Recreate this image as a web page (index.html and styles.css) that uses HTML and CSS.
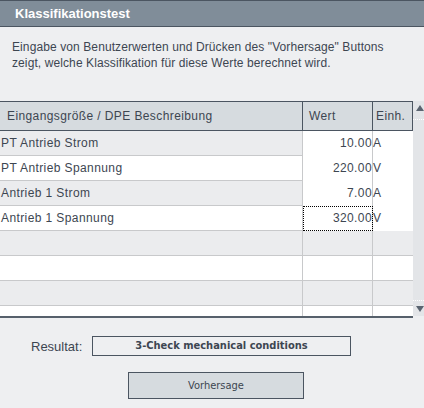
FILE: index.html
```html
<!DOCTYPE html>
<html>
<head>
<meta charset="utf-8">
<link rel="stylesheet" href="styles.css">
</head>
<body>
<div class="titlebar">Klassifikationstest</div>
<div class="desc">Eingabe von Benutzerwerten und Drücken des "Vorhersage" Buttons<br>zeigt, welche Klassifikation für diese Werte berechnet wird.</div>
<div class="tablearea">
  <div class="table">
    <div class="row head">
      <div class="c1">Eingangsgröße / DPE Beschreibung</div>
      <div class="c2">Wert</div>
      <div class="c3">Einh.</div>
    </div>
    <div class="row alt data">
      <div class="c1">PT Antrieb Strom</div>
      <div class="c2">10.00</div>
      <div class="c3">A</div>
    </div>
    <div class="row data">
      <div class="c1">PT Antrieb Spannung</div>
      <div class="c2">220.00</div>
      <div class="c3">V</div>
    </div>
    <div class="row alt data">
      <div class="c1">Antrieb 1 Strom</div>
      <div class="c2">7.00</div>
      <div class="c3">A</div>
    </div>
    <div class="row data">
      <div class="c1">Antrieb 1 Spannung</div>
      <div class="c2 focus">320.00</div>
      <div class="c3">V</div>
    </div>
    <div class="row alt"><div class="c1"></div><div class="c2"></div><div class="c3"></div></div>
    <div class="row"><div class="c1"></div><div class="c2"></div><div class="c3"></div></div>
    <div class="row alt"><div class="c1"></div><div class="c2"></div><div class="c3"></div></div>
    <div class="row"><div class="c1"></div><div class="c2"></div><div class="c3"></div></div>
  </div>
  <div class="scrollbar">
    <div class="arrow up"></div>
    <div class="dots first"></div>
    <div class="track"></div>
    <div class="dots last"></div>
    <div class="arrow down"></div>
  </div>
</div>
<div class="result">
  <span class="label">Resultat:</span>
  <div class="resbox">3-Check mechanical conditions</div>
</div>
<div class="actions">
  <button class="btn">Vorhersage</button>
</div>
</body>
</html>
```
FILE: styles.css
```css
html, body {
  margin: 0;
  padding: 0;
}
body {
  width: 424px;
  height: 408px;
  overflow: hidden;
  background: #eeeff1;
  font-family: "Liberation Sans", Arial, sans-serif;
  color: #3d4651;
}
.titlebar {
  height: 25px;
  line-height: 25px;
  border-top: 1px solid #4b5561;
  border-bottom: 1px solid #4b5561;
  background: #808d99;
  color: #ffffff;
  font-weight: bold;
  font-size: 13px;
  padding-left: 15px;
}
.desc {
  margin-top: 12px;
  padding-left: 12px;
  font-size: 12px;
  line-height: 16px;
  letter-spacing: 0.1px;
}
.tablearea {
  display: flex;
  margin-top: 30px;
}
.table {
  width: 413px;
  height: 215px;
  overflow: hidden;
  border-bottom: 2px solid #56606b;
  font-size: 12px;
  letter-spacing: 0.4px;
}
.row {
  display: grid;
  grid-template-columns: 303px 70px 40px;
  height: 24px;
  line-height: 25px;
  background: #ffffff;
  border-bottom: 1px solid #c8c9cb;
}
.row.alt {
  background: #ebecee;
}
.row > div {
  white-space: nowrap;
}
.row .c1,
.row .c2 {
  border-right: 1px solid #c8c9cb;
}
.row .c1 {
  padding-left: 1px;
}
.row.data .c2,
.row.data .c3 {
  background: #ffffff;
}
.row .c2 {
  text-align: right;
}
.row .focus {
  outline: 1px dotted #000000;
  outline-offset: -1px;
}
.row.head {
  height: 28px;
  line-height: 28px;
  background: #d6dbdf;
  border-top: 1px solid #4b5561;
  border-bottom: 1px solid #4b5561;
}
.row.head .c1,
.row.head .c2,
.row.head .c3 {
  border-right: 1px solid #4b5561;
}
.row.head .c1 {
  padding-left: 7px;
}
.row.head .c2 {
  text-align: left;
  padding-left: 6px;
}
.row.head .c3 {
  padding-left: 3px;
}
.scrollbar {
  width: 11px;
  height: 215px;
  background: #e3e5e8;
  display: flex;
  flex-direction: column;
  align-items: center;
}
.arrow {
  width: 0;
  height: 0;
  border-left: 4px solid transparent;
  border-right: 4px solid transparent;
  margin-left: 3px;
}
.arrow.up {
  margin-top: 4px;
  border-bottom: 6px solid #5a6470;
}
.arrow.down {
  margin-top: 5px;
  margin-bottom: 4px;
  border-top: 6px solid #5a6470;
}
.dots {
  width: 11px;
  border-top: 1px dotted #ffffff;
}
.dots.first {
  margin-top: 8px;
}
.track {
  flex: 1;
}
.result {
  display: flex;
  align-items: center;
  margin-top: 18px;
  height: 20px;
}
.label {
  margin-left: 31px;
  width: 61px;
  font-size: 13px;
}
.resbox {
  width: 257px;
  height: 18px;
  line-height: 18px;
  border: 1px solid #4b5561;
  text-align: center;
  font-family: "DejaVu Sans Condensed", "DejaVu Sans", sans-serif;
  font-weight: bold;
  font-size: 11px;
}
.actions {
  margin-top: 16px;
  padding-left: 128px;
}
.btn {
  width: 176px;
  height: 27px;
  margin: 0;
  padding: 0;
  background: #d6dbdf;
  border: 1px solid #4b5561;
  border-radius: 0;
  color: #3d4651;
  font-family: "DejaVu Sans Condensed", "DejaVu Sans", sans-serif;
  font-size: 11px;
}
```
